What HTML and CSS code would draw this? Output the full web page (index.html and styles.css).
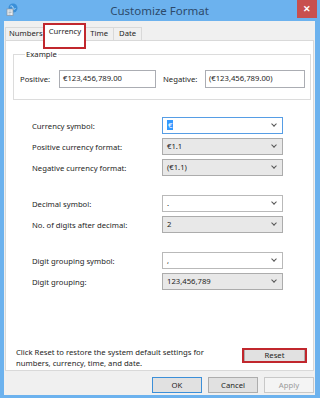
FILE: index.html
```html
<!DOCTYPE html>
<html lang="en">
<head>
    <meta charset="UTF-8">
    <title>Customize Format</title>
    <link rel="stylesheet" href="styles.css">
</head>
<body>
<div class="window">
    <div class="titlebar">
        <svg class="app-icon" width="12" height="13" viewBox="0 0 12 13">
            <circle cx="7" cy="5" r="4.5" fill="#3a8fd8"/>
            <path d="M4.5 3.2 C6 2.5 7.5 3.5 7 5 C6.5 6.2 8.5 6.5 9.5 5.5" stroke="#bfe3ff" stroke-width="1" fill="none"/>
            <rect x="1" y="6" width="6" height="6.5" fill="#e9eef3" stroke="#8a98a6" stroke-width="0.8"/>
            <path d="M2.5 8 H5.5 M2.5 9.5 H5.5 M2.5 11 H4.5" stroke="#8a98a6" stroke-width="0.6"/>
        </svg>
        <div class="title">Customize Format</div>
        <div class="close">&#x2715;</div>
    </div>
    <div class="client">
        <div class="tabs">
            <div class="tab">Numbers</div>
            <div class="tab active">Currency<span class="mark mark-tab"></span></div>
            <div class="tab short">Time</div>
            <div class="tab short">Date</div>
        </div>
        <div class="panel">
            <fieldset class="example">
                <legend>Example</legend>
                <div class="example-row">
                    <span class="ex-label">Positive:</span>
                    <div class="textbox">€123,456,789.00</div>
                    <span class="ex-label neg">Negative:</span>
                    <div class="textbox">(€123,456,789.00)</div>
                </div>
            </fieldset>

            <div class="form">
                <div class="group">
                    <label>Currency symbol:</label>
                    <div class="combo edit focus"><span class="sel">€</span><span class="arrow"></span></div>
                    <label>Positive currency format:</label>
                    <div class="combo list">€1.1<span class="arrow"></span></div>
                    <label>Negative currency format:</label>
                    <div class="combo list">(€1.1)<span class="arrow"></span></div>
                </div>
                <div class="group">
                    <label>Decimal symbol:</label>
                    <div class="combo edit">.<span class="arrow"></span></div>
                    <label>No. of digits after decimal:</label>
                    <div class="combo list">2<span class="arrow"></span></div>
                </div>
                <div class="group">
                    <label>Digit grouping symbol:</label>
                    <div class="combo edit">,<span class="arrow"></span></div>
                    <label>Digit grouping:</label>
                    <div class="combo list">123,456,789<span class="arrow"></span></div>
                </div>
            </div>

            <div class="reset-row">
                <p>Click Reset to restore the system default settings for numbers, currency, time, and date.</p>
                <div class="button reset">Reset<span class="mark mark-btn"></span></div>
            </div>
        </div>
        <div class="buttons">
            <div class="button default">OK</div>
            <div class="button">Cancel</div>
            <div class="button disabled">Apply</div>
        </div>
    </div>
</div>
</body>
</html>
```

FILE: styles.css
```css
html, body { margin: 0; padding: 0; }
body {
    font-family: "Noto Sans", "Open Sans", sans-serif;
    font-size: 7.7px;
    color: #1e1e1e;
    background: #fff;
}

.window {
    width: 320px;
    height: 398px;
    box-sizing: border-box;
    background: #6cb2ee;
    padding: 0 5px 3px 4px;
    display: flex;
    flex-direction: column;
}

/* title bar */
.titlebar {
    height: 21px;
    display: flex;
    align-items: center;
    position: relative;
}
.app-icon { margin: 0 0 2px 2px; }
.title {
    position: absolute;
    left: 0;
    right: 0;
    top: 3px;
    text-align: center;
    font-size: 11.5px;
    color: #2c4a6b;
}
.close {
    position: absolute;
    right: -2px;
    top: 0;
    width: 20px;
    height: 18px;
    background: #c8504e;
    color: #fff;
    font-size: 9px;
    font-weight: bold;
    text-align: center;
    line-height: 18px;
}

/* client area */
.client {
    flex: 1;
    background: #f0f0f0;
    padding: 2px 1px 0 1px;
    display: flex;
    flex-direction: column;
}

.tabs {
    display: flex;
    align-items: flex-end;
    height: 17px;
    position: relative;
    z-index: 1;
}
.tab {
    height: 12px;
    line-height: 11px;
    padding: 0 3px 0 3px;
    border: 1px solid #d9d9d9;
    border-bottom: none;
    background: #f0f0f0;
    margin-right: -1px;
}
.tab.short { padding: 0 5px; }
.tab.active {
    height: 17px;
    background: #fff;
    position: relative;
    padding: 0 3px 0 4px;
    margin: 0 -1px -1px -2px;
    line-height: 15px;
}

/* annotation rectangles */
.mark {
    position: absolute;
    border: 2px solid #c1272d;
    pointer-events: none;
}
.mark-tab { left: -2px; top: -1px; right: -2px; bottom: -8px; }
.mark-btn { left: -3px; top: -2px; right: -3px; bottom: -2px; }

.panel {
    height: 331px;
    box-sizing: border-box;
    background: #fff;
    border: 1px solid #d9d9d9;
    padding: 8px 6px 0 7px;
    display: flex;
    flex-direction: column;
}

/* example group */
.example {
    margin: 0;
    padding: 11px 5px 11px 6px;
    border: 1px solid #dcdcdc;
}
.example legend {
    padding: 0 1px;
    margin-left: 5px;
}
.example-row {
    display: flex;
    align-items: center;
}
.ex-label { width: 39px; }
.ex-label.neg { margin-left: 7px; width: 42px; }
.textbox {
    width: 95px;
    height: 16px;
    border: 1px solid #abadb3;
    padding-left: 3px;
    line-height: 15px;
    box-sizing: content-box;
    background: #fff;
}
.textbox:first-of-type { width: 92px; }

/* form */
.form {
    margin: 17px 0 0 19px;
    display: flex;
    flex-direction: column;
    gap: 19px;
}
.group {
    display: grid;
    grid-template-columns: 130px 121px;
    row-gap: 4px;
    align-items: center;
}
.combo {
    height: 15px;
    border: 1px solid #acacac;
    padding-left: 4px;
    line-height: 15px;
    position: relative;
}
.combo.edit { background: #fff; border-color: #b9b9b9; }
.combo.list { background: #e8e8e8; }
.combo.focus { border-color: #569de5; }
.combo .sel {
    background: #3399ff;
    color: #fff;
    padding: 0 1px;
}
.arrow {
    position: absolute;
    right: 6px;
    top: 4px;
    width: 3px;
    height: 3px;
    border-right: 1px solid #555;
    border-bottom: 1px solid #555;
    transform: rotate(45deg);
}

/* reset */
.reset-row {
    margin-top: auto;
    margin-bottom: 2px;
    display: flex;
    align-items: flex-start;
    justify-content: space-between;
}
.reset-row p {
    margin: 0 0 0 3px;
    line-height: 10.5px;
    width: 200px;
}
.button {
    width: 48px;
    height: 14px;
    line-height: 14px;
    text-align: center;
    border: 1px solid #adadad;
    background: #e1e1e1;
    position: relative;
}
.reset {
    width: 59px;
    height: 11px;
    line-height: 11px;
    margin: 2px 2px 0 0;
}

.buttons {
    display: flex;
    justify-content: flex-end;
    gap: 6px;
    margin-top: 6px;
}
.button.default { border-color: #3c8fd8; }
.button.disabled {
    background: #f4f4f4;
    border-color: #c8c8c8;
    color: #9a9a9a;
}
```
